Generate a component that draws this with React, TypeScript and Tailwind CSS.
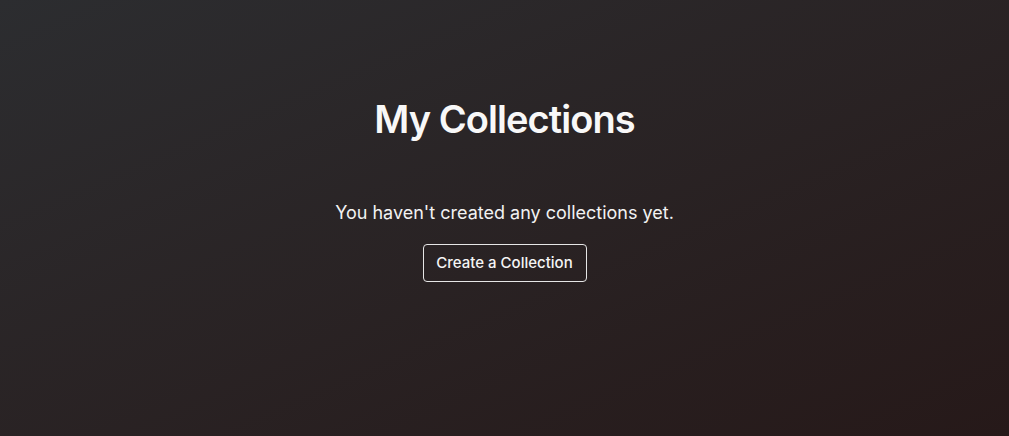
export default function App() {
  return (
    <div
      className="w-full h-[436px] flex flex-col items-center bg-linear-to-br from-[#2c2d30] to-[#261919] text-white"
      style={{ fontFamily: "Inter, 'Noto Sans', sans-serif" }}
    >
      <h1 className="mt-[95px] text-[38px] leading-[48px] font-semibold tracking-[-0.025em] text-[#f8f8f8]">
        My Collections
      </h1>
      <p className="mt-[57px] text-[18px] leading-[26px] text-[#f2f2f2]">
        You haven't created any collections yet.
      </p>
      <button className="mt-[18px] h-[38px] w-[164px] border border-[#e6e6e6] rounded-[4px] text-[15px] font-medium text-[#f5f5f5]">
        Create a Collection
      </button>
    </div>
  );
}
